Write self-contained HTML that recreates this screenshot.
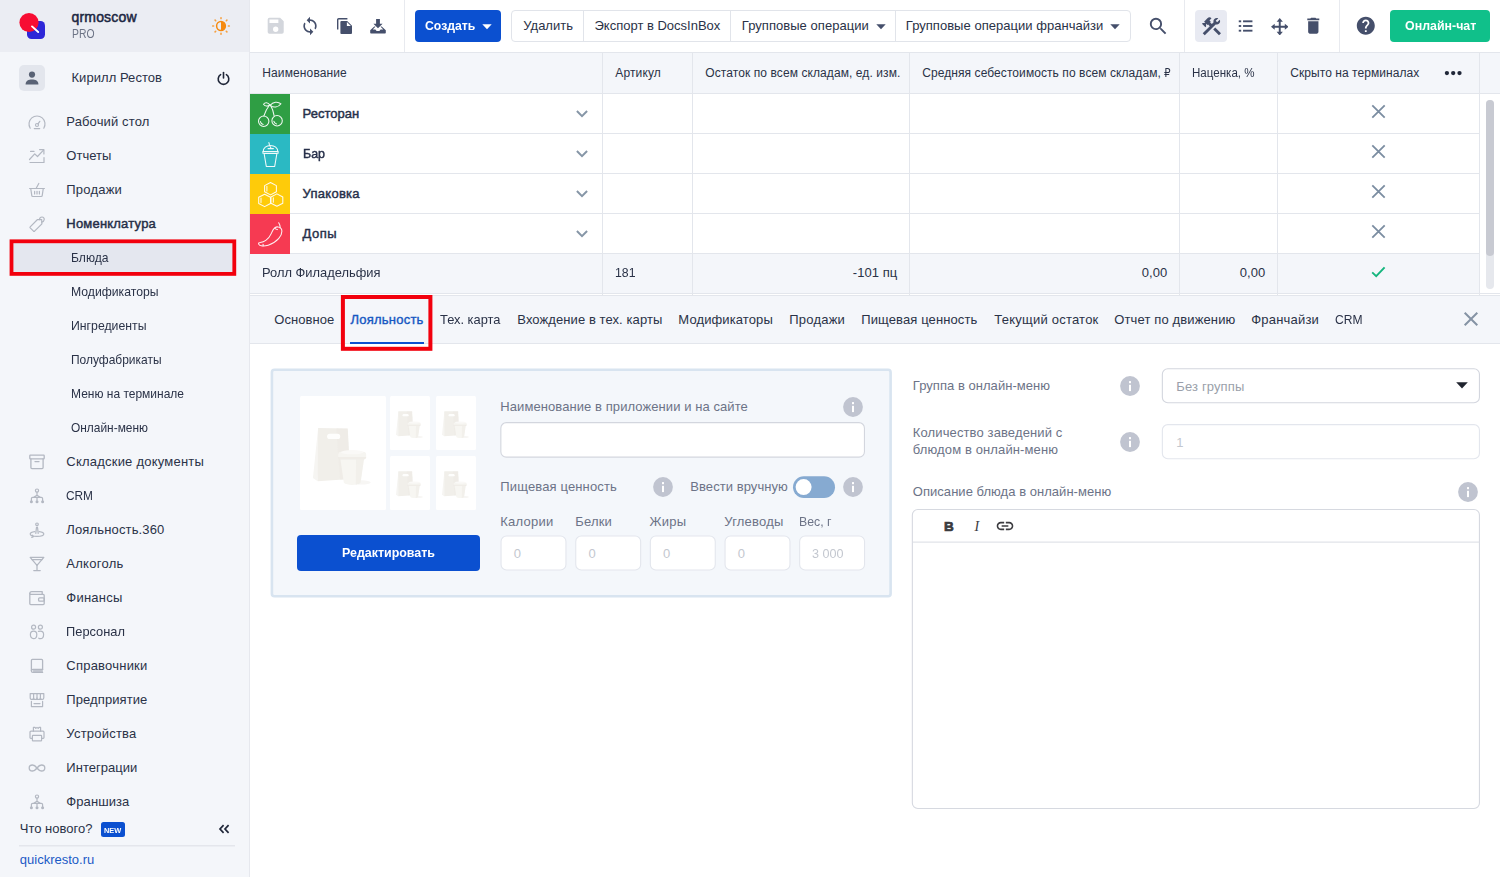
<!DOCTYPE html>
<html lang="ru"><head><meta charset="utf-8"><title>Quick Resto — Блюда</title>
<style>
*{box-sizing:content-box;margin:0;padding:0}
html,body{width:1500px;height:877px;overflow:hidden;background:#fff}
body{position:relative;font-family:"Liberation Sans",sans-serif;font-size:13px;color:#2a3247}
.abs{position:absolute;display:block}
.t{position:absolute;display:block;white-space:nowrap;height:20px;line-height:20px}
.side{position:absolute;left:0;top:0;width:249px;height:877px;background:#f4f6fa;border-right:1px solid #e6e8ee}
.shead{position:absolute;left:0;top:0;width:249px;height:52px;background:#ebedf3}
.barbg{position:absolute;left:250px;top:0;width:1250px;height:52px;background:#fff;border-bottom:1px solid #e3e6ec}
.vsep{position:absolute;top:0;width:1px;height:52px;background:#e8eaef}
.inp{border:1px solid #d5d8e0;border-radius:5px;background:#fff}
.inp2{border:1px solid #e6e8ee;border-radius:5px;background:#fff}
</style></head>
<body>
<aside class="side">
<div class="shead"></div>
<svg class="abs" style="left:17px;top:10px" width="32" height="32" viewBox="17 10 32 32">
<rect x="27" y="21" width="18" height="18" rx="4.5" fill="#2e27d8"/>
<circle cx="29" cy="22.5" r="9.6" fill="#f70d33"/>
<line x1="32" y1="26.4" x2="38.2" y2="32" stroke="#fff" stroke-width="1.9" stroke-linecap="round"/>
</svg>
<span class="t" style="top:7px;font-size:14px;color:#1c2742;-webkit-text-stroke:0.5px #1c2742;letter-spacing:0.172px;left:71.50px;">qrmoscow</span>
<span class="t" style="top:24px;font-size:12px;color:#6d7486;left:71.70px;transform:scaleX(0.8653);transform-origin:0 50%;">PRO</span>
<svg class="abs" style="left:210px;top:14.800px" width="22" height="22" viewBox="0 0 22 22" fill="none">
<circle cx="11" cy="11" r="4.400" stroke="#f58a10" stroke-width="1.500"/>
<path d="M11 6.600a4.400 4.400 0 0 1 0 8.800z" fill="#f58a10"/>
<g stroke="#f6a040" stroke-width="1.600" stroke-linecap="round">
<line x1="11" y1="2.700" x2="11" y2="3.600"/><line x1="11" y1="18.400" x2="11" y2="19.300"/>
<line x1="2.700" y1="11" x2="3.600" y2="11"/><line x1="18.400" y1="11" x2="19.300" y2="11"/>
<line x1="5.100" y1="5.100" x2="5.700" y2="5.700"/><line x1="16.300" y1="16.300" x2="16.900" y2="16.900"/>
<line x1="5.100" y1="16.900" x2="5.700" y2="16.300"/><line x1="16.300" y1="5.700" x2="16.900" y2="5.100"/>
</g></svg>
<div class="abs" style="left:19px;top:65px;width:26px;height:26px;border-radius:5px;background:#e3e6ed"></div>
<svg class="abs" style="left:24px;top:70px" width="16" height="16" viewBox="0 0 16 16" fill="#596275">
<circle cx="8" cy="4.6" r="3.1"/><path d="M1.6 14.2c0-3.2 3-4.6 6.4-4.6s6.4 1.4 6.4 4.6v.3H1.6z"/></svg>
<span class="t" style="top:68px;font-size:13px;color:#2a3247;letter-spacing:0.051px;left:71.50px;">Кирилл Рестов</span>
<svg class="abs" style="left:216px;top:71px" width="15" height="15" viewBox="0 0 15 15" fill="none" stroke="#1f2638" stroke-width="1.6" stroke-linecap="round">
<path d="M4.6 3.6a5.3 5.3 0 1 0 5.8 0"/><line x1="7.5" y1="1.6" x2="7.5" y2="7"/></svg>
<svg class="abs" style="left:27px;top:111.5px" width="20" height="20" viewBox="0 0 20 20"><g transform="translate(0 1)" fill="none" stroke="#b3b8c2" stroke-width="1.2" stroke-linecap="round"><path d="M3.2 15.2a8 8 0 1 1 13.6 0"/><circle cx="10" cy="12" r="1.5"/><line x1="11" y1="10.9" x2="12.8" y2="8.3"/><line x1="7.3" y1="15.6" x2="12.7" y2="15.6"/></g></svg>
<span class="t" style="top:112px;font-size:13px;color:#2a3247;letter-spacing:0.127px;left:66.30px;">Рабочий стол</span>
<svg class="abs" style="left:27px;top:145.5px" width="20" height="20" viewBox="0 0 20 20"><g fill="none" stroke="#b3b8c2" stroke-width="1.2" stroke-linecap="round" stroke-linejoin="round"><path d="M2.5 13.5l5.2-5.6 2.8 2.6 6-6.3"/><path d="M12.6 3.6h4.3v4.3"/><path d="M3 16.500h14v-5M3.600 5.400h3.400"/></g></svg>
<span class="t" style="top:146px;font-size:13px;color:#2a3247;letter-spacing:0.013px;left:66.30px;">Отчеты</span>
<svg class="abs" style="left:27px;top:179.5px" width="20" height="20" viewBox="0 0 20 20"><g fill="none" stroke="#b3b8c2" stroke-width="1.2" stroke-linecap="round" stroke-linejoin="round"><path d="M2.6 8.5h14.8"/><path d="M3.8 9l1 6.6a1 1 0 0 0 1 .9h8.4a1 1 0 0 0 1-.9l1-6.6"/><path d="M9.2 8.3l2.6-4.8"/><line x1="7.6" y1="11.4" x2="7.6" y2="14"/><line x1="10" y1="11.4" x2="10" y2="14"/><line x1="12.4" y1="11.4" x2="12.4" y2="14"/></g></svg>
<span class="t" style="top:180px;font-size:13px;color:#2a3247;letter-spacing:0.201px;left:66.30px;">Продажи</span>
<svg class="abs" style="left:27px;top:213.5px" width="20" height="20" viewBox="0 0 20 20"><g fill="none" stroke="#b3b8c2" stroke-width="1.2" stroke-linecap="round" stroke-linejoin="round"><path d="M3.2 12.8l7.3-7.3 4.2 0.2 0.2 4.2-7.3 7.3a.8.8 0 0 1-1.1 0l-3.3-3.3a.8.8 0 0 1 0-1.1z"/><path d="M12.4 5.6c.2-1.6 1.2-2.6 2.6-2.6 1.5 0 2.4 1.2 2.2 2.6-.2 1.3-1.2 2.3-2.6 2.6"/></g></svg>
<span class="t" style="top:214px;font-size:13px;color:#252e47;-webkit-text-stroke:0.45px #252e47;letter-spacing:0.205px;left:66.30px;">Номенклатура</span>
<svg class="abs" style="left:0;top:230px" width="249" height="56" viewBox="0 230 249 56"><rect x="11.5" y="241.3" width="222.800" height="32.600" fill="#e4e7ef" stroke="#f2000d" stroke-width="3.800"/></svg>
<span class="t" style="top:248px;font-size:13px;color:#2a3247;left:70.70px;transform:scaleX(0.9317);transform-origin:0 50%;">Блюда</span>
<span class="t" style="top:282px;font-size:13px;color:#2a3247;left:70.70px;transform:scaleX(0.9383);transform-origin:0 50%;">Модификаторы</span>
<span class="t" style="top:316px;font-size:13px;color:#2a3247;left:70.70px;transform:scaleX(0.9438);transform-origin:0 50%;">Ингредиенты</span>
<span class="t" style="top:350px;font-size:13px;color:#2a3247;left:70.70px;transform:scaleX(0.9206);transform-origin:0 50%;">Полуфабрикаты</span>
<span class="t" style="top:384px;font-size:13px;color:#2a3247;left:70.70px;transform:scaleX(0.9228);transform-origin:0 50%;">Меню на терминале</span>
<span class="t" style="top:418px;font-size:13px;color:#2a3247;left:70.70px;transform:scaleX(0.9170);transform-origin:0 50%;">Онлайн-меню</span>
<svg class="abs" style="left:27px;top:451.5px" width="20" height="20" viewBox="0 0 20 20"><g fill="none" stroke="#b3b8c2" stroke-width="1.3" stroke-linejoin="round" stroke-linecap="round"><rect x="2.8" y="3.2" width="14.4" height="3.6" rx=".6"/><path d="M3.9 7v8.6a1 1 0 0 0 1 1h10.2a1 1 0 0 0 1-1V7"/><line x1="8" y1="9.6" x2="12" y2="9.6"/></g></svg>
<span class="t" style="top:452px;font-size:13px;color:#2a3247;letter-spacing:0.219px;left:66.30px;">Складские документы</span>
<svg class="abs" style="left:27px;top:485.5px" width="20" height="20" viewBox="0 0 20 20"><g fill="none" stroke="#b3b8c2" stroke-width="1.2" stroke-linecap="round" stroke-linejoin="round"><circle cx="10" cy="4.6" r="1.6"/><path d="M10 6.3v3M4.4 14.4v-1.8c0-.8.5-1.3 1.3-1.3h8.6c.8 0 1.3.5 1.3 1.3v1.8M10 9.3l-3.4 2M10 9.3l3.4 2M10 11.3v3"/></g><g fill="#b3b8c2"><circle cx="4.4" cy="15.7" r="1.5"/><circle cx="10" cy="15.7" r="1.5"/><circle cx="15.6" cy="15.7" r="1.5"/></g></svg>
<span class="t" style="top:486px;font-size:13px;color:#2a3247;left:66.30px;transform:scaleX(0.9120);transform-origin:0 50%;">CRM</span>
<svg class="abs" style="left:27px;top:519.5px" width="20" height="20" viewBox="0 0 20 20"><g fill="none" stroke="#b3b8c2" stroke-width="1.2" stroke-linecap="round" stroke-linejoin="round"><circle cx="10" cy="4.3" r="1.3"/><path d="M8.8 13.4l.6-5.4c0-.5.3-.8.6-.8s.6.3.6.8l.6 5.4"/><path d="M7.8 11.6c-2.8.4-4.6 1.3-4.6 2.3 0 1.4 3 2.4 6.8 2.4s6.8-1 6.8-2.400c0-1-1.800-1.900-4.600-2.300"/><path d="M5.200 15.200l1.200 1.400-1.600.8"/></g></svg>
<span class="t" style="top:520px;font-size:13px;color:#2a3247;letter-spacing:0.146px;left:66.30px;">Лояльность.360</span>
<svg class="abs" style="left:27px;top:553.5px" width="20" height="20" viewBox="0 0 20 20"><g fill="none" stroke="#b3b8c2" stroke-width="1.3" stroke-linecap="round" stroke-linejoin="round"><path d="M3.200 3.400h13.600l-6.800 8z"/><line x1="10" y1="11.400" x2="10" y2="16.400"/><line x1="6.800" y1="16.600" x2="13.200" y2="16.600"/><line x1="5" y1="5.600" x2="15" y2="5.600"/></g></svg>
<span class="t" style="top:554px;font-size:13px;color:#2a3247;letter-spacing:0.274px;left:66.30px;">Алкоголь</span>
<svg class="abs" style="left:27px;top:587.5px" width="20" height="20" viewBox="0 0 20 20"><g fill="none" stroke="#b3b8c2" stroke-width="1.3" stroke-linecap="round" stroke-linejoin="round"><path d="M2.800 5.600v10a1 1 0 0 0 1 1h12.400a1 1 0 0 0 1-1v-8.200a1 1 0 0 0-1-1h-13.400"/><path d="M2.800 5.600c0-1.300.7-2 2-2h10.400v2.600"/><rect x="11.600" y="9.800" width="5.600" height="3.400" rx="1"/></g></svg>
<span class="t" style="top:588px;font-size:13px;color:#2a3247;letter-spacing:0.237px;left:66.30px;">Финансы</span>
<svg class="abs" style="left:27px;top:621.5px" width="20" height="20" viewBox="0 0 20 20"><g fill="none" stroke="#b3b8c2" stroke-width="1.2" stroke-linecap="round" stroke-linejoin="round"><circle cx="6.600" cy="5.200" r="2"/><circle cx="13.400" cy="5.200" r="2"/><path d="M3.400 12.400c0-2 .8-3.200 3.200-3.200s3.200 1.200 3.200 3.200c0 2.400-1 4.200-3.200 4.200s-3.200-1.800-3.200-4.200z"/><path d="M11.400 9.400c.5-.1 1.200-.200 2-.200 2.400 0 3.200 1.200 3.200 3.200 0 2.400-1 4.200-3.200 4.200-.6 0-1.200-.100-1.600-.400"/></g></svg>
<span class="t" style="top:622px;font-size:13px;color:#2a3247;left:66.30px;transform:scaleX(0.9887);transform-origin:0 50%;">Персонал</span>
<svg class="abs" style="left:27px;top:655.5px" width="20" height="20" viewBox="0 0 20 20"><g fill="none" stroke="#b3b8c2" stroke-width="1.3" stroke-linecap="round" stroke-linejoin="round"><path d="M4.400 14.400v-10a1 1 0 0 1 1-1h9.200a1 1 0 0 1 1 1v9"/><path d="M15.600 13.400h-9.700c-.9 0-1.500.6-1.500 1.500s.6 1.500 1.500 1.500h9.700"/><line x1="6.400" y1="15" x2="15.400" y2="15"/></g></svg>
<span class="t" style="top:656px;font-size:13px;color:#2a3247;letter-spacing:0.224px;left:66.30px;">Справочники</span>
<svg class="abs" style="left:27px;top:689.5px" width="20" height="20" viewBox="0 0 20 20"><g fill="none" stroke="#b3b8c2" stroke-width="1.2" stroke-linecap="round" stroke-linejoin="round"><path d="M3.200 3.600h13.600v4.200c0 1-.7 1.700-1.700 1.700s-1.700-.7-1.700-1.700c0 1-.7 1.700-1.700 1.700s-1.700-.7-1.700-1.700c0 1-.7 1.700-1.700 1.700s-1.700-.7-1.700-1.700c0 1-.7 1.700-1.700 1.700s-1.700-.7-1.700-1.700z"/><path d="M6.600 3.600v4M13.400 3.600v4M10 3.600v4"/><path d="M4.400 11.400v5.200h11.200v-5.200M7 13.600h6"/></g></svg>
<span class="t" style="top:690px;font-size:13px;color:#2a3247;letter-spacing:0.088px;left:66.30px;">Предприятие</span>
<svg class="abs" style="left:27px;top:723.5px" width="20" height="20" viewBox="0 0 20 20"><g fill="none" stroke="#b3b8c2" stroke-width="1.2" stroke-linecap="round" stroke-linejoin="round"><path d="M6.400 7.200v-3.800h1.600l.8 1 1.200-1 1.200 1 .8-1h1.600v3.800"/><path d="M5.200 14.400h-1.400a.8.8 0 0 1-.8-.8v-5.400a1 1 0 0 1 1-1h12a1 1 0 0 1 1 1v5.400a.8.8 0 0 1-.8.800h-1.400"/><rect x="5.400" y="11.400" width="9.200" height="5.400" rx=".6"/></g></svg>
<span class="t" style="top:724px;font-size:13px;color:#2a3247;letter-spacing:0.221px;left:66.30px;">Устройства</span>
<svg class="abs" style="left:27px;top:757.5px" width="20" height="20" viewBox="0 0 20 20"><g fill="none" stroke="#b3b8c2" stroke-width="1.300" stroke-linecap="round" stroke-linejoin="round"><path d="M10 10c-1.500-2-2.800-3-4.500-3-1.900 0-3.300 1.300-3.300 3s1.400 3 3.300 3c1.700 0 3-1 4.500-3s2.800-3 4.500-3c1.900 0 3.300 1.300 3.300 3s-1.400 3-3.300 3c-1.700 0-3-1-4.500-3z"/></g></svg>
<span class="t" style="top:758px;font-size:13px;color:#2a3247;letter-spacing:0.030px;left:66.30px;">Интеграции</span>
<svg class="abs" style="left:27px;top:791.5px" width="20" height="20" viewBox="0 0 20 20"><g fill="none" stroke="#b3b8c2" stroke-width="1.2" stroke-linecap="round" stroke-linejoin="round"><circle cx="10" cy="4.6" r="1.6"/><path d="M10 6.3v3M4.4 14.4v-1.8c0-.8.5-1.3 1.3-1.3h8.6c.8 0 1.3.5 1.3 1.3v1.8M10 9.3l-3.4 2M10 9.3l3.4 2M10 11.3v3"/></g><g fill="#b3b8c2"><circle cx="4.4" cy="15.7" r="1.5"/><circle cx="10" cy="15.7" r="1.5"/><circle cx="15.6" cy="15.7" r="1.5"/></g></svg>
<span class="t" style="top:792px;font-size:13px;color:#2a3247;letter-spacing:0.085px;left:66.30px;">Франшиза</span>
<span class="t" style="top:819px;font-size:13px;color:#2a3247;left:19.80px;">Что нового?</span>
<div class="abs" style="left:101px;top:822px;width:24px;height:15px;border-radius:2.5px;background:#0b50d0"></div>
<span class="t" style="top:821px;font-size:7.5px;color:#fff;font-weight:700;left:104.40px;transform:scaleX(0.9887);transform-origin:0 50%;">NEW</span>
<svg class="abs" style="left:218px;top:823px" width="12" height="12" viewBox="0 0 12 12" fill="none" stroke="#1f2638" stroke-width="1.7"><path d="M5.600 2.200l-3.600 3.800 3.600 3.800M10.600 2.200l-3.600 3.800 3.600 3.800"/></svg>
<div class="abs" style="left:19px;top:845px;width:216px;height:1px;background:#e4e6ec"></div><div class="abs" style="left:19px;top:846px;width:216px;height:1px;background:#eceef3"></div>
<span class="t" style="top:850px;font-size:13px;color:#1b5ac6;left:19.80px;">quickresto.ru</span>
</aside>
<header class="bar"><div class="barbg"></div>
<svg class="abs" style="left:265.300px;top:15.300px" width="21.400" height="21.400" viewBox="0 0 24 24" fill="#d3d6dc"><path d="M17 3H5a2 2 0 0 0-2 2v14a2 2 0 0 0 2 2h14a2 2 0 0 0 2-2V7l-4-4zm-5 16a3 3 0 1 1 0-6 3 3 0 0 1 0 6zm3-10H5V5h10v4z"/></svg>
<svg class="abs" style="left:300.400px;top:16px" width="20" height="20" viewBox="0 0 24 24" fill="#454f6b"><path d="M12 4V1L8 5l4 4V6c3.310 0 6 2.690 6 6 0 1.010-.25 1.970-.7 2.800l1.460 1.460A7.930 7.930 0 0 0 20 12c0-4.420-3.580-8-8-8zm0 14c-3.310 0-6-2.690-6-6 0-1.010.25-1.970.7-2.800L5.240 7.740A7.930 7.930 0 0 0 4 12c0 4.420 3.580 8 8 8v3l4-4-4-4v3z"/></svg>
<svg class="abs" style="left:337px;top:18px" width="15" height="16" viewBox="0 0 15 16"><path d="M0.700 11.400V1.700a1 1 0 0 1 1-1H10.400" fill="none" stroke="#454f6b" stroke-width="1.400"/><path d="M4.400 3h5.800L15 7.800V15a1 1 0 0 1-1 1H4.400a1 1 0 0 1-1-1V4a1 1 0 0 1 1-1z" fill="#454f6b"/><path d="M9.900 3.900v4h4z" fill="#fff"/></svg>
<svg class="abs" style="left:370px;top:19px" width="16" height="14.500" viewBox="0 0 16 14.500" fill="#454f6b"><path d="M6.100 0h3.800v4.800h2.700L8 9.200 3.400 4.800h2.700z"/><path d="M4.300 7.600L0.200 11.200v2.500a.8.800 0 0 0 .8.800h14a.8.800 0 0 0 .8-.8v-2.500L11.700 7.600h-1.300l2.900 3h-2.700l-1.200 1.500H6.600L5.400 10.600H2.700l2.900-3z"/></svg>
<div class="vsep" style="left:404px"></div>
<div class="abs" style="left:415px;top:10px;width:86px;height:32px;border-radius:4px;background:#0b50d0"></div>
<span class="t" style="top:16px;font-size:13px;color:#fff;font-weight:700;left:425.40px;transform:scaleX(0.9409);transform-origin:0 50%;">Создать</span>
<svg class="abs" style="left:481.500px;top:23.500px" width="10" height="6" viewBox="0 0 10 6"><path d="M0.300 0.300h9.400l-4.700 5z" fill="#fff"/></svg>
<div class="abs" style="left:511px;top:10px;width:618px;height:30px;border-radius:4px;border:1px solid #e1e4ea;background:#fff"></div>
<div class="abs" style="left:583px;top:11px;width:1px;height:30px;background:#e1e4ea"></div>
<div class="abs" style="left:730px;top:11px;width:1px;height:30px;background:#e1e4ea"></div>
<div class="abs" style="left:895px;top:11px;width:1px;height:30px;background:#e1e4ea"></div>
<span class="t" style="top:16px;font-size:13px;color:#2a3247;left:523.30px;">Удалить</span>
<span class="t" style="top:16px;font-size:13px;color:#2a3247;left:594.50px;">Экспорт в DocsInBox</span>
<span class="t" style="top:16px;font-size:13px;color:#2a3247;letter-spacing:0.046px;left:741.80px;">Групповые операции</span>
<span class="t" style="top:16px;font-size:13px;color:#2a3247;letter-spacing:0.031px;left:905.80px;">Групповые операции франчайзи</span>
<svg class="abs" style="left:876px;top:23.500px" width="10" height="6" viewBox="0 0 10 6"><path d="M0.300 0.300h9.400l-4.700 5z" fill="#454f6b"/></svg>
<svg class="abs" style="left:1109.5px;top:23.500px" width="10" height="6" viewBox="0 0 10 6"><path d="M0.300 0.300h9.400l-4.700 5z" fill="#454f6b"/></svg>
<svg class="abs" style="left:1147.300px;top:15.300px" width="22.600" height="22.600" viewBox="0 0 24 24" fill="#454f6b"><path d="M15.500 14h-.79l-.28-.27A6.470 6.470 0 0 0 16 9.500 6.500 6.500 0 1 0 9.500 16c1.610 0 3.090-.59 4.230-1.570l.27.28v.79l5 4.990L20.490 19l-4.990-5zm-6 0C7.010 14 5 11.990 5 9.500S7.010 5 9.500 5 14 7.010 14 9.500 11.990 14 9.500 14z"/></svg>
<div class="vsep" style="left:1184px"></div>
<div class="abs" style="left:1195px;top:10px;width:32px;height:32px;border-radius:4px;background:#e8eaf2"></div>
<svg class="abs" style="left:1199.800px;top:14.800px" width="23" height="23" viewBox="0 0 24 24" fill="#454f6b"><path d="M13.783 15.172l2.121-2.121 5.996 5.996-2.121 2.121zM17.500 10c1.930 0 3.500-1.570 3.500-3.500 0-.58-.16-1.120-.41-1.600l-2.700 2.700-1.490-1.490 2.700-2.700c-.48-.25-1.020-.41-1.600-.41C15.570 3 14 4.570 14 6.500c0 .41.080.8.210 1.160l-1.850 1.850-1.780-1.780.71-.71-1.410-1.410L12 3.490a3 3 0 0 0-4.240 0L4.220 7.030l1.410 1.410H2.810l-.71.710 3.540 3.540.71-.71V9.150l1.410 1.410.71-.71 1.780 1.780-7.410 7.410 2.120 2.120L16.340 9.790c.36.130.75.210 1.160.210z"/></svg>
<svg class="abs" style="left:1237.500px;top:19px" width="15" height="14" viewBox="0 0 16 14" fill="#454f6b"><rect x="0.800" y="1" width="2.600" height="2"/><rect x="5.400" y="1" width="10" height="2"/><rect x="0.800" y="6" width="2.600" height="2"/><rect x="5.400" y="6" width="10" height="2"/><rect x="0.800" y="11" width="2.600" height="2"/><rect x="5.400" y="11" width="10" height="2"/></svg>
<svg class="abs" style="left:1270.500px;top:17.500px" width="17.500" height="17.500" viewBox="0 0 18 18" fill="#454f6b"><path d="M9 0l3.200 3.800H10V8h4.200V5.800L18 9l-3.800 3.200V10H10v4.200h2.200L9 18l-3.200-3.800H8V10H3.800v2.200L0 9l3.800-3.200V8H8V3.800H5.800z"/></svg>
<svg class="abs" style="left:1302.700px;top:14.700px" width="20.600" height="21.300" viewBox="0 0 24 24" preserveAspectRatio="none" fill="#454f6b"><path d="M6 19c0 1.100.9 2 2 2h8c1.100 0 2-.9 2-2V7H6v12zM19 4h-3.500l-1-1h-5l-1 1H5v2h14V4z"/></svg>
<div class="vsep" style="left:1339px"></div>
<svg class="abs" style="left:1355.200px;top:15.300px" width="21.600" height="21.600" viewBox="0 0 24 24" fill="#454f6b"><path d="M12 2C6.480 2 2 6.480 2 12s4.480 10 10 10 10-4.480 10-10S17.520 2 12 2zm1 17h-2v-2h2v2zm2.070-7.750l-.9.920C13.450 12.900 13 13.500 13 15h-2v-.5c0-1.100.45-2.100 1.170-2.830l1.240-1.260c.37-.36.59-.86.59-1.410 0-1.100-.9-2-2-2s-2 .9-2 2H8c0-2.210 1.790-4 4-4s4 1.790 4 4c0 .88-.36 1.680-.93 2.250z"/></svg>
<div class="abs" style="left:1390px;top:10px;width:100px;height:32px;border-radius:4px;background:#10c08a"></div>
<span class="t" style="top:16px;font-size:13px;color:#fff;font-weight:700;left:1404.70px;transform:scaleX(0.9536);transform-origin:0 50%;">Онлайн-чат</span>
</header>
<main class="main">
<div class="abs" style="left:250px;top:53px;width:1250px;height:40px;background:#f4f6fa"></div>
<span class="t" style="top:63px;font-size:12px;color:#2a3247;letter-spacing:0.119px;left:262.30px;">Наименование</span>
<span class="t" style="top:63px;font-size:12px;color:#2a3247;letter-spacing:0.127px;left:615.30px;">Артикул</span>
<span class="t" style="top:63px;font-size:12px;color:#2a3247;letter-spacing:0.086px;left:705.30px;">Остаток по всем складам, ед. изм.</span>
<span class="t" style="top:63px;font-size:12px;color:#2a3247;letter-spacing:0.075px;left:922.30px;">Средняя себестоимость по всем складам,</span>
<span class="t" style="left:1164px;top:63px;font-size:11.500px;color:#2a3247;font-family:'DejaVu Sans',sans-serif;transform:scaleX(.9);transform-origin:0 50%">₽</span>
<span class="t" style="top:63px;font-size:12px;color:#2a3247;left:1192.30px;transform:scaleX(0.9630);transform-origin:0 50%;">Наценка, %</span>
<span class="t" style="top:63px;font-size:12px;color:#2a3247;letter-spacing:0.060px;left:1290.30px;">Скрыто на терминалах</span>
<svg class="abs" style="left:1444px;top:70px" width="19" height="6" viewBox="0 0 19 6" fill="#1f2638"><circle cx="2.900" cy="3.100" r="2.150"/><circle cx="9.200" cy="3.100" r="2.150"/><circle cx="15.500" cy="3.100" r="2.150"/></svg>
<div class="abs" style="left:250px;top:253px;width:1229px;height:40px;background:#f4f6fa"></div>
<div class="abs" style="left:250px;top:93px;width:1250px;height:1px;background:#e3e6ec"></div>
<div class="abs" style="left:250px;top:133px;width:1229px;height:1px;background:#e3e6ec"></div>
<div class="abs" style="left:250px;top:173px;width:1229px;height:1px;background:#e3e6ec"></div>
<div class="abs" style="left:250px;top:213px;width:1229px;height:1px;background:#e3e6ec"></div>
<div class="abs" style="left:250px;top:253px;width:1229px;height:1px;background:#e3e6ec"></div>
<div class="abs" style="left:250px;top:293px;width:1250px;height:1px;background:#e3e6ec"></div>
<div class="abs" style="left:602px;top:53px;width:1px;height:242px;background:#e3e6ec"></div>
<div class="abs" style="left:692px;top:53px;width:1px;height:242px;background:#e3e6ec"></div>
<div class="abs" style="left:909px;top:53px;width:1px;height:242px;background:#e3e6ec"></div>
<div class="abs" style="left:1179px;top:53px;width:1px;height:242px;background:#e3e6ec"></div>
<div class="abs" style="left:1277px;top:53px;width:1px;height:242px;background:#e3e6ec"></div>
<div class="abs" style="left:1479px;top:53px;width:1px;height:242px;background:#e3e6ec"></div>
<div class="abs" style="left:250px;top:94px;width:40px;height:40px;background:#2f9e44"></div>
<svg class="abs" style="left:250px;top:94px" width="40" height="40" viewBox="0 0 40 40"><g fill="none" stroke="#fff" stroke-width="1.050" stroke-linecap="round" stroke-linejoin="round" opacity=".93"><circle cx="13.700" cy="27.200" r="5.200"/><circle cx="27.100" cy="26.800" r="5.200"/><path d="M13.900 21.900C15.300 17.500 17.300 13.800 19.700 10.700M24.100 21.600C23.500 17.800 22.300 14.300 20.400 11"/><path d="M19.800 10.900C17.800 8.300 15 8.200 13.500 10.300c1.700 2.200 4.400 2.400 6.300.6zM20.200 11.300C23 7.700 27.800 7.200 31 9.800c-2.700 3.700-7.600 4.200-10.800 1.500z"/><path d="M10.400 27.600c.3 1.500 1.300 2.500 2.800 2.800M23.800 27.200c.3 1.500 1.300 2.500 2.800 2.800"/></g></svg>
<span class="t" style="top:104px;font-size:13px;color:#27304a;-webkit-text-stroke:0.45px #27304a;left:302.60px;">Ресторан</span>
<svg class="abs" style="left:575px;top:109px" width="14" height="10" viewBox="0 0 14 10" fill="none" stroke="#8696a7" stroke-width="2"><path d="M1.900 2l5.100 5.100 5.100-5.100"/></svg>
<svg class="abs" style="left:1371px;top:104.2px" width="15" height="15" viewBox="0 0 15 15" fill="none" stroke="#7b8da1" stroke-width="1.800"><path d="M1.300 1.300l12.400 12.400M13.700 1.300L1.300 13.700"/></svg>
<div class="abs" style="left:250px;top:134px;width:40px;height:40px;background:#2bb9c3"></div>
<svg class="abs" style="left:250px;top:134px" width="40" height="40" viewBox="0 0 40 40"><g fill="none" stroke="#fff" stroke-width="1.050" stroke-linecap="round" stroke-linejoin="round" opacity=".93"><path d="M13.200 17.400c0-3.600 3.200-6 7.300-6s7.300 2.400 7.300 6z"/><rect x="12.900" y="17.400" width="15.200" height="1.800"/><path d="M14.100 19.500h12.800L24.700 32.400h-8.400z"/><path d="M18.900 8.600c.3 1 .5 2 .6 3M18 14.600h5.400M20.100 12.600l1 2"/></g></svg>
<span class="t" style="top:144px;font-size:13px;color:#27304a;-webkit-text-stroke:0.45px #27304a;left:302.60px;transform:scaleX(0.9569);transform-origin:0 50%;">Бар</span>
<svg class="abs" style="left:575px;top:149px" width="14" height="10" viewBox="0 0 14 10" fill="none" stroke="#8696a7" stroke-width="2"><path d="M1.900 2l5.100 5.100 5.100-5.100"/></svg>
<svg class="abs" style="left:1371px;top:144.2px" width="15" height="15" viewBox="0 0 15 15" fill="none" stroke="#7b8da1" stroke-width="1.800"><path d="M1.300 1.300l12.400 12.400M13.700 1.300L1.300 13.700"/></svg>
<div class="abs" style="left:250px;top:174px;width:40px;height:40px;background:#fecb0a"></div>
<svg class="abs" style="left:250px;top:174px" width="40" height="40" viewBox="0 0 40 40"><g fill="none" stroke="#fff" stroke-width="1.050" stroke-linejoin="round" stroke-linecap="round" opacity=".93"><path d="M20.5 8.5L26.4 11.6L26.4 17.8L20.5 20.9L14.6 17.8L14.6 11.6zM14.6 20.2L20.5 23.3L20.5 29.5L14.6 32.6L8.7 29.5L8.7 23.3zM26.9 19.9L32.8 23.0L32.8 29.2L26.9 32.3L21.0 29.2L21.0 23.0z"/><path d="M16.900 12.300v4.600M11 24v4.600M23.300 23.700v4.600"/></g></svg>
<span class="t" style="top:184px;font-size:13px;color:#27304a;-webkit-text-stroke:0.45px #27304a;letter-spacing:0.269px;left:302.60px;">Упаковка</span>
<svg class="abs" style="left:575px;top:189px" width="14" height="10" viewBox="0 0 14 10" fill="none" stroke="#8696a7" stroke-width="2"><path d="M1.900 2l5.100 5.100 5.100-5.100"/></svg>
<svg class="abs" style="left:1371px;top:184.2px" width="15" height="15" viewBox="0 0 15 15" fill="none" stroke="#7b8da1" stroke-width="1.800"><path d="M1.300 1.300l12.400 12.400M13.700 1.300L1.300 13.700"/></svg>
<div class="abs" style="left:250px;top:214px;width:40px;height:40px;background:#f63a52"></div>
<svg class="abs" style="left:250px;top:214px" width="40" height="40" viewBox="0 0 40 40"><g fill="none" stroke="#fff" stroke-width="1.050" stroke-linecap="round" stroke-linejoin="round" opacity=".93"><path d="M8.800 30.200c-.6-1.200.3-1.700 1.400-1.700 2.600-.4 4.300-1.200 5.600-2.100 2.400-1.700 4.100-3.800 5.300-6.500 1-2.200 1.800-4.400 3.300-5.700 1.100-.9 2.300-1.400 3.500-1.300 2.300.2 4 1.900 4 4.300 0 2.700-1.400 5.400-3.300 7.500-2.700 3-6.400 5.300-10.400 6.500-2.600.8-5 .9-6.900.6-1.200-.2-2-.7-2.500-1.600z"/><path d="M28.700 8.700c1 1.500 1.600 3.200 1.400 5.200M24.600 14.200c.9.900 1.600 1.300 2.800 1.400M13 30.300c.3.500.3 1 .1 1.500"/></g></svg>
<span class="t" style="top:224px;font-size:13px;color:#27304a;-webkit-text-stroke:0.45px #27304a;letter-spacing:0.479px;left:302.60px;">Допы</span>
<svg class="abs" style="left:575px;top:229px" width="14" height="10" viewBox="0 0 14 10" fill="none" stroke="#8696a7" stroke-width="2"><path d="M1.900 2l5.100 5.100 5.100-5.100"/></svg>
<svg class="abs" style="left:1371px;top:224.2px" width="15" height="15" viewBox="0 0 15 15" fill="none" stroke="#7b8da1" stroke-width="1.800"><path d="M1.300 1.300l12.400 12.400M13.700 1.300L1.300 13.700"/></svg>
<span class="t" style="top:263px;font-size:13px;color:#2a3247;left:262.30px;transform:scaleX(0.9914);transform-origin:0 50%;">Ролл Филадельфия</span>
<span class="t" style="top:263px;font-size:13px;color:#2a3247;left:615.30px;transform:scaleX(0.9451);transform-origin:0 50%;">181</span>
<span class="t" style="top:263px;font-size:13px;color:#2a3247;letter-spacing:0.064px;right:602.64px;">-101 пц</span>
<span class="t" style="top:263px;font-size:13px;color:#2a3247;letter-spacing:0.066px;right:332.63px;">0,00</span>
<span class="t" style="top:263px;font-size:13px;color:#2a3247;letter-spacing:0.066px;right:234.63px;">0,00</span>
<svg class="abs" style="left:1371px;top:266px" width="15" height="12" viewBox="0 0 15 12" fill="none" stroke="#14b57d" stroke-width="1.900"><path d="M1.200 6.400l4 3.800 8.400-8.800"/></svg>
<div class="abs" style="left:1486px;top:100px;width:8px;height:188.500px;border-radius:4px;background:#e6e8ed"></div>
<div class="abs" style="left:1486px;top:100px;width:8px;height:156px;border-radius:4px;background:#c8cad2"></div>
<div class="abs" style="left:250px;top:295px;width:1250px;height:47px;background:#f4f6fa;border-top:1px solid #e3e6ec;border-bottom:1px solid #e3e6ec"></div>
<span class="t" style="top:310px;font-size:13px;color:#2a3247;letter-spacing:0.062px;left:274.30px;">Основное</span>
<span class="t" style="top:310px;font-size:13px;color:#2a3247;left:440.30px;transform:scaleX(0.9908);transform-origin:0 50%;">Тех. карта</span>
<span class="t" style="top:310px;font-size:13px;color:#2a3247;letter-spacing:0.086px;left:517.30px;">Вхождение в тех. карты</span>
<span class="t" style="top:310px;font-size:13px;color:#2a3247;letter-spacing:0.113px;left:678.30px;">Модификаторы</span>
<span class="t" style="top:310px;font-size:13px;color:#2a3247;letter-spacing:0.201px;left:789.30px;">Продажи</span>
<span class="t" style="top:310px;font-size:13px;color:#2a3247;letter-spacing:0.109px;left:861.30px;">Пищевая ценность</span>
<span class="t" style="top:310px;font-size:13px;color:#2a3247;letter-spacing:0.228px;left:994.30px;">Текущий остаток</span>
<span class="t" style="top:310px;font-size:13px;color:#2a3247;letter-spacing:0.128px;left:1114.30px;">Отчет по движению</span>
<span class="t" style="top:310px;font-size:13px;color:#2a3247;letter-spacing:0.186px;left:1251.30px;">Франчайзи</span>
<span class="t" style="top:310px;font-size:13px;color:#2a3247;left:1335.30px;transform:scaleX(0.9289);transform-origin:0 50%;">CRM</span>
<span class="t" style="top:310px;font-size:13px;color:#1657c2;-webkit-text-stroke:0.4px #1657c2;letter-spacing:0.245px;left:350.40px;">Лояльность</span>
<div class="abs" style="left:350px;top:342px;width:74px;height:2px;background:#0b50d0"></div>
<svg class="abs" style="left:330px;top:290px" width="120" height="70" viewBox="330 290 120 70"><rect x="342.900" y="297" width="87.500" height="51.800" fill="none" stroke="#f2000d" stroke-width="4"/></svg>
<svg class="abs" style="left:1463px;top:311px" width="16" height="16" viewBox="0 0 16 16" fill="none" stroke="#8593a4" stroke-width="2"><path d="M1.700 1.700l12.600 12.600M14.300 1.700L1.700 14.300"/></svg>
<svg class="abs" style="left:268px;top:366px" width="626" height="234" viewBox="268 366 626 234"><rect x="271.90" y="369.70" width="618.70" height="226.50" rx="2.5" fill="#f4f7fb" stroke="#d8e4f0" stroke-width="2.6"/></svg>
<svg class="abs" style="left:299.700px;top:395.900px;background:#fff;border-radius:1.500px" width="86.300" height="114.100" viewBox="0 0 100 132" preserveAspectRatio="none"><defs><filter id="bl" x="-10%" y="-10%" width="120%" height="120%"><feGaussianBlur stdDeviation=".7"/></filter></defs><g filter="url(#bl)"><ellipse cx="71" cy="100" rx="11" ry="2.500" fill="#f7f6f4"/><path d="M21 37L15 95l5.500 3.500L22.500 40z" fill="#f6f5f2"/><path d="M21 37l34.300.500L58.500 96 20.500 98.500z" fill="#f1efea"/><path d="M42 37.300l13.300.200L58.500 96l-12 .8z" fill="#ebe8e1" opacity=".35"/><rect x="31.400" y="43.800" width="15.200" height="6" rx="3" fill="#fefefd"/><path d="M46.700 72h27.600L70.200 100.500c-3 3.200-16.400 3.200-19.400 0z" fill="#f7f6f2"/><path d="M65 72h9.300L70.200 100.500c-1 1-3 1.800-5.500 2.200z" fill="#ebe8e2" opacity=".45"/><rect x="44.300" y="64.500" width="32.400" height="9" rx="3.500" fill="#f6f5f1"/><path d="M44.300 70.500h32.400v.5a2.500 2.500 0 0 1-2.500 2.500H46.800a2.500 2.500 0 0 1-2.500-2.500z" fill="#e9e6e0" opacity=".5"/><ellipse cx="60.500" cy="65" rx="13" ry="2.400" fill="#faf9f7"/></g></svg>
<svg class="abs" style="left:390.1px;top:395.9px;background:#fff;border-radius:1.500px" width="40" height="54" viewBox="0 0 100 132" preserveAspectRatio="none"><g filter="url(#bl)"><ellipse cx="71" cy="100" rx="11" ry="2.500" fill="#f7f6f4"/><path d="M21 37L15 95l5.500 3.500L22.500 40z" fill="#f6f5f2"/><path d="M21 37l34.300.500L58.500 96 20.500 98.500z" fill="#f1efea"/><path d="M42 37.300l13.300.200L58.500 96l-12 .8z" fill="#ebe8e1" opacity=".35"/><rect x="31.400" y="43.800" width="15.200" height="6" rx="3" fill="#fefefd"/><path d="M46.700 72h27.600L70.200 100.500c-3 3.200-16.400 3.200-19.400 0z" fill="#f7f6f2"/><path d="M65 72h9.300L70.200 100.500c-1 1-3 1.800-5.500 2.200z" fill="#ebe8e2" opacity=".45"/><rect x="44.300" y="64.500" width="32.400" height="9" rx="3.500" fill="#f6f5f1"/><path d="M44.300 70.500h32.400v.5a2.500 2.500 0 0 1-2.500 2.500H46.800a2.500 2.500 0 0 1-2.500-2.500z" fill="#e9e6e0" opacity=".5"/><ellipse cx="60.500" cy="65" rx="13" ry="2.400" fill="#faf9f7"/></g></svg>
<svg class="abs" style="left:435.9px;top:395.9px;background:#fff;border-radius:1.500px" width="40" height="54" viewBox="0 0 100 132" preserveAspectRatio="none"><g filter="url(#bl)"><ellipse cx="71" cy="100" rx="11" ry="2.500" fill="#f7f6f4"/><path d="M21 37L15 95l5.500 3.500L22.500 40z" fill="#f6f5f2"/><path d="M21 37l34.300.500L58.500 96 20.500 98.500z" fill="#f1efea"/><path d="M42 37.300l13.300.200L58.500 96l-12 .8z" fill="#ebe8e1" opacity=".35"/><rect x="31.400" y="43.800" width="15.200" height="6" rx="3" fill="#fefefd"/><path d="M46.700 72h27.600L70.200 100.500c-3 3.200-16.400 3.200-19.400 0z" fill="#f7f6f2"/><path d="M65 72h9.300L70.200 100.500c-1 1-3 1.800-5.500 2.200z" fill="#ebe8e2" opacity=".45"/><rect x="44.300" y="64.500" width="32.400" height="9" rx="3.500" fill="#f6f5f1"/><path d="M44.300 70.500h32.400v.5a2.500 2.500 0 0 1-2.500 2.500H46.800a2.500 2.500 0 0 1-2.500-2.500z" fill="#e9e6e0" opacity=".5"/><ellipse cx="60.500" cy="65" rx="13" ry="2.400" fill="#faf9f7"/></g></svg>
<svg class="abs" style="left:390.1px;top:456.1px;background:#fff;border-radius:1.500px" width="40" height="54" viewBox="0 0 100 132" preserveAspectRatio="none"><g filter="url(#bl)"><ellipse cx="71" cy="100" rx="11" ry="2.500" fill="#f7f6f4"/><path d="M21 37L15 95l5.500 3.500L22.500 40z" fill="#f6f5f2"/><path d="M21 37l34.300.500L58.500 96 20.500 98.500z" fill="#f1efea"/><path d="M42 37.300l13.300.200L58.500 96l-12 .8z" fill="#ebe8e1" opacity=".35"/><rect x="31.400" y="43.800" width="15.200" height="6" rx="3" fill="#fefefd"/><path d="M46.700 72h27.600L70.200 100.500c-3 3.200-16.400 3.200-19.400 0z" fill="#f7f6f2"/><path d="M65 72h9.300L70.200 100.500c-1 1-3 1.800-5.500 2.200z" fill="#ebe8e2" opacity=".45"/><rect x="44.300" y="64.500" width="32.400" height="9" rx="3.500" fill="#f6f5f1"/><path d="M44.300 70.500h32.400v.5a2.500 2.500 0 0 1-2.500 2.500H46.800a2.500 2.500 0 0 1-2.500-2.500z" fill="#e9e6e0" opacity=".5"/><ellipse cx="60.500" cy="65" rx="13" ry="2.400" fill="#faf9f7"/></g></svg>
<svg class="abs" style="left:435.9px;top:456.1px;background:#fff;border-radius:1.500px" width="40" height="54" viewBox="0 0 100 132" preserveAspectRatio="none"><g filter="url(#bl)"><ellipse cx="71" cy="100" rx="11" ry="2.500" fill="#f7f6f4"/><path d="M21 37L15 95l5.500 3.500L22.500 40z" fill="#f6f5f2"/><path d="M21 37l34.300.500L58.500 96 20.500 98.500z" fill="#f1efea"/><path d="M42 37.300l13.300.200L58.500 96l-12 .8z" fill="#ebe8e1" opacity=".35"/><rect x="31.400" y="43.800" width="15.200" height="6" rx="3" fill="#fefefd"/><path d="M46.700 72h27.600L70.200 100.500c-3 3.200-16.400 3.200-19.400 0z" fill="#f7f6f2"/><path d="M65 72h9.300L70.200 100.500c-1 1-3 1.800-5.500 2.200z" fill="#ebe8e2" opacity=".45"/><rect x="44.300" y="64.500" width="32.400" height="9" rx="3.500" fill="#f6f5f1"/><path d="M44.300 70.500h32.400v.5a2.500 2.500 0 0 1-2.500 2.500H46.800a2.500 2.500 0 0 1-2.500-2.500z" fill="#e9e6e0" opacity=".5"/><ellipse cx="60.500" cy="65" rx="13" ry="2.400" fill="#faf9f7"/></g></svg>
<div class="abs" style="left:297px;top:535px;width:183px;height:36px;border-radius:4px;background:#0b50d0"></div>
<span class="t" style="top:543px;font-size:13px;color:#fff;font-weight:700;left:342.00px;transform:scaleX(0.9566);transform-origin:0 50%;">Редактировать</span>
<span class="t" style="top:397px;font-size:13px;color:#6c7387;letter-spacing:0.078px;left:500.30px;">Наименование в приложении и на сайте</span>
<svg class="abs" style="left:843.1px;top:396.9px" width="20" height="20" viewBox="0 0 20 20"><circle cx="10" cy="10" r="9.900" fill="#c0c4d0"/><rect x="9" y="5.100" width="2" height="2.100" fill="#fff"/><rect x="9" y="8.800" width="2" height="6.300" fill="#fff"/></svg>
<svg class="abs" style="left:498px;top:420px" width="369" height="40" viewBox="498 420 369 40"><rect x="500.85" y="422.65" width="363.60" height="34.50" rx="5.5" fill="#fff" stroke="#d3d6de" stroke-width="1.1"/></svg>
<span class="t" style="top:477px;font-size:13px;color:#6c7387;letter-spacing:0.142px;left:500.30px;">Пищевая ценность</span>
<svg class="abs" style="left:653px;top:477.1px" width="20" height="20" viewBox="0 0 20 20"><circle cx="10" cy="10" r="9.900" fill="#c0c4d0"/><rect x="9" y="5.100" width="2" height="2.100" fill="#fff"/><rect x="9" y="8.800" width="2" height="6.300" fill="#fff"/></svg>
<span class="t" style="top:477px;font-size:13px;color:#6c7387;letter-spacing:0.063px;left:690.30px;">Ввести вручную</span>
<svg class="abs" style="left:790px;top:474px" width="48" height="26" viewBox="790 474 48 26"><rect x="793" y="476.300" width="42" height="21.700" rx="10.850" fill="#86aad1"/><circle cx="803.600" cy="487.100" r="8" fill="#fff"/></svg>
<svg class="abs" style="left:843px;top:477.1px" width="20" height="20" viewBox="0 0 20 20"><circle cx="10" cy="10" r="9.900" fill="#c0c4d0"/><rect x="9" y="5.100" width="2" height="2.100" fill="#fff"/><rect x="9" y="8.800" width="2" height="6.300" fill="#fff"/></svg>
<span class="t" style="top:512px;font-size:13px;color:#6c7387;letter-spacing:0.247px;left:500.30px;">Калории</span>
<span class="t" style="top:512px;font-size:13px;color:#6c7387;letter-spacing:0.159px;left:575.30px;">Белки</span>
<span class="t" style="top:512px;font-size:13px;color:#6c7387;letter-spacing:0.220px;left:649.50px;">Жиры</span>
<span class="t" style="top:512px;font-size:13px;color:#6c7387;letter-spacing:0.203px;left:724.30px;">Углеводы</span>
<span class="t" style="top:512px;font-size:13px;color:#6c7387;left:799.30px;transform:scaleX(0.9457);transform-origin:0 50%;">Вес, г</span>
<svg class="abs" style="left:498px;top:533px" width="71" height="40" viewBox="498 533 71 40"><rect x="501.05" y="536.05" width="64.90" height="33.90" rx="5.5" fill="#fff" stroke="#e3e6ed" stroke-width="1.1"/></svg>
<span class="t" style="top:544px;font-size:13px;color:#c3c7cf;left:513.70px;">0</span>
<svg class="abs" style="left:573px;top:533px" width="71" height="40" viewBox="573 533 71 40"><rect x="575.75" y="536.05" width="64.90" height="33.90" rx="5.5" fill="#fff" stroke="#e3e6ed" stroke-width="1.1"/></svg>
<span class="t" style="top:544px;font-size:13px;color:#c3c7cf;left:588.40px;">0</span>
<svg class="abs" style="left:647px;top:533px" width="71" height="40" viewBox="647 533 71 40"><rect x="650.35" y="536.05" width="64.90" height="33.90" rx="5.5" fill="#fff" stroke="#e3e6ed" stroke-width="1.1"/></svg>
<span class="t" style="top:544px;font-size:13px;color:#c3c7cf;left:663.00px;">0</span>
<svg class="abs" style="left:722px;top:533px" width="71" height="40" viewBox="722 533 71 40"><rect x="725.05" y="536.05" width="64.90" height="33.90" rx="5.5" fill="#fff" stroke="#e3e6ed" stroke-width="1.1"/></svg>
<span class="t" style="top:544px;font-size:13px;color:#c3c7cf;left:737.70px;">0</span>
<svg class="abs" style="left:797px;top:533px" width="71" height="40" viewBox="797 533 71 40"><rect x="799.65" y="536.05" width="64.90" height="33.90" rx="5.5" fill="#fff" stroke="#e3e6ed" stroke-width="1.1"/></svg>
<span class="t" style="top:544px;font-size:13px;color:#c3c7cf;left:812.00px;transform:scaleX(0.9683);transform-origin:0 50%;">3 000</span>
<span class="t" style="top:376px;font-size:13px;color:#6c7387;letter-spacing:0.041px;left:912.80px;">Группа в онлайн-меню</span>
<svg class="abs" style="left:1120px;top:376.4px" width="20" height="20" viewBox="0 0 20 20"><circle cx="10" cy="10" r="9.900" fill="#c0c4d0"/><rect x="9" y="5.100" width="2" height="2.100" fill="#fff"/><rect x="9" y="8.800" width="2" height="6.300" fill="#fff"/></svg>
<svg class="abs" style="left:1159px;top:366px" width="323" height="40" viewBox="1159 366 323 40"><rect x="1162.35" y="368.75" width="317.10" height="34.00" rx="5.5" fill="#fff" stroke="#d3d6de" stroke-width="1.1"/></svg>
<span class="t" style="top:377px;font-size:13px;color:#9a9faa;letter-spacing:0.134px;left:1176.30px;">Без группы</span>
<svg class="abs" style="left:1456px;top:381.800px" width="12" height="7" viewBox="0 0 12 7"><path d="M0.200 0.300h11.600l-5.800 6.200z" fill="#20242e"/></svg>
<span class="t" style="top:423px;font-size:13px;color:#6c7387;letter-spacing:0.121px;left:912.80px;">Количество заведений с</span>
<span class="t" style="top:440px;font-size:13px;color:#6c7387;letter-spacing:0.122px;left:912.80px;">блюдом в онлайн-меню</span>
<svg class="abs" style="left:1120px;top:432.1px" width="20" height="20" viewBox="0 0 20 20"><circle cx="10" cy="10" r="9.900" fill="#c0c4d0"/><rect x="9" y="5.100" width="2" height="2.100" fill="#fff"/><rect x="9" y="8.800" width="2" height="6.300" fill="#fff"/></svg>
<svg class="abs" style="left:1159px;top:422px" width="323" height="40" viewBox="1159 422 323 40"><rect x="1162.35" y="424.65" width="317.10" height="34.10" rx="5.5" fill="#fff" stroke="#e3e6ed" stroke-width="1.1"/></svg>
<span class="t" style="top:433px;font-size:13px;color:#c3c7cf;left:1176.30px;">1</span>
<span class="t" style="top:482px;font-size:13px;color:#6c7387;letter-spacing:0.038px;left:912.80px;">Описание блюда в онлайн-меню</span>
<svg class="abs" style="left:1457.8px;top:481.8px" width="20" height="20" viewBox="0 0 20 20"><circle cx="10" cy="10" r="9.900" fill="#c0c4d0"/><rect x="9" y="5.100" width="2" height="2.100" fill="#fff"/><rect x="9" y="8.800" width="2" height="6.300" fill="#fff"/></svg>
<svg class="abs" style="left:909px;top:507px" width="573" height="304" viewBox="909 507 573 304"><rect x="912.35" y="509.55" width="567.10" height="298.90" rx="5.5" fill="#fff" stroke="#d6d9e0" stroke-width="1.1"/><rect x="912.500" y="541.600" width="567" height="1" fill="#d9dce3"/></svg>
<span class="t" style="top:517px;font-size:13.5px;color:#3b3b3f;font-weight:700;left:944.00px;-webkit-text-stroke:.7px #3b3b3f;">B</span>
<span class="t" style="left:974.500px;top:516.500px;font-size:14px;font-style:italic;font-family:'Liberation Serif',serif;color:#3b3b3f">I</span>
<svg class="abs" style="left:995px;top:516px" width="20" height="20" viewBox="0 0 24 24" fill="#3b3b3f"><path d="M3.900 12c0-1.710 1.390-3.100 3.100-3.100h4V7H7c-2.760 0-5 2.240-5 5s2.240 5 5 5h4v-1.900H7c-1.710 0-3.100-1.390-3.100-3.100zM8 13h8v-2H8v2zm9-6h-4v1.900h4c1.710 0 3.100 1.390 3.100 3.100s-1.390 3.100-3.100 3.100h-4V17h4c2.760 0 5-2.240 5-5s-2.240-5-5-5z"/></svg>
</main>
</body></html>
